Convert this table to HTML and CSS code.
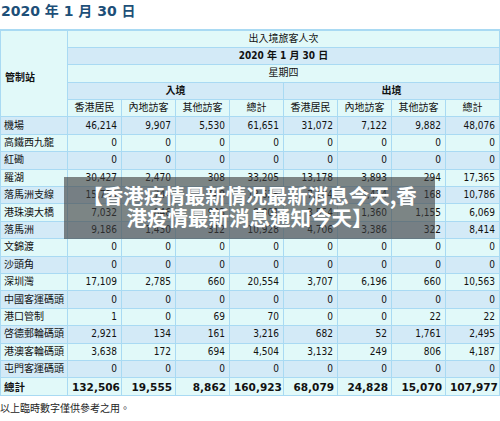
FILE: index.html
```html
<!DOCTYPE html>
<html lang="zh-Hant">
<head>
    <meta charset="UTF-8">
    <meta name="viewport" content="width=device-width, initial-scale=1.0">
    <title>出入境旅客人次</title>
    <link rel="stylesheet" href="styles.css">
</head>
<body>

    <div class="page">
        <h1 class="date-title">2020 年 1 月 30 日</h1>

        <div class="table-wrap">
            <table class="stats">
                <colgroup>
                    <col class="col-name">
                    <col span="8" class="col-num">
                </colgroup>
                <thead>
                    <tr class="cyan">
                        <th rowspan="5" class="station-head">管制站</th>
                        <th colspan="8" class="plain">出入境旅客人次</th>
                    </tr>
                    <tr class="blue">
                        <th colspan="8">2020 年 1 月 30 日</th>
                    </tr>
                    <tr class="cyan">
                        <th colspan="8" class="plain">星期四</th>
                    </tr>
                    <tr class="blue">
                        <th colspan="4">入境</th>
                        <th colspan="4">出境</th>
                    </tr>
                    <tr class="cyan">
                        <th class="plain">香港居民</th>
                        <th class="plain">內地訪客</th>
                        <th class="plain">其他訪客</th>
                        <th class="plain">總計</th>
                        <th class="plain">香港居民</th>
                        <th class="plain">內地訪客</th>
                        <th class="plain">其他訪客</th>
                        <th class="plain">總計</th>
                    </tr>
                </thead>
                <tbody>
                    <tr class="blue"><td>機場</td><td>46,214</td><td>9,907</td><td>5,530</td><td>61,651</td><td>31,072</td><td>7,122</td><td>9,882</td><td>48,076</td></tr>
                    <tr class="cyan"><td>高鐵西九龍</td><td>0</td><td>0</td><td>0</td><td>0</td><td>0</td><td>0</td><td>0</td><td>0</td></tr>
                    <tr class="blue"><td>紅磡</td><td>0</td><td>0</td><td>0</td><td>0</td><td>0</td><td>0</td><td>0</td><td>0</td></tr>
                    <tr class="cyan"><td>羅湖</td><td>30,427</td><td>2,470</td><td>308</td><td>33,205</td><td>13,178</td><td>3,893</td><td>294</td><td>17,365</td></tr>
                    <tr class="blue"><td>落馬洲支線</td><td>15,733</td><td>2,744</td><td>148</td><td>18,625</td><td>7,184</td><td>3,434</td><td>168</td><td>10,786</td></tr>
                    <tr class="cyan"><td>港珠澳大橋</td><td>7,032</td><td>846</td><td>923</td><td>8,801</td><td>3,554</td><td>1,360</td><td>1,155</td><td>6,069</td></tr>
                    <tr class="blue"><td>落馬洲</td><td>9,186</td><td>1,430</td><td>312</td><td>10,928</td><td>4,706</td><td>3,386</td><td>322</td><td>8,414</td></tr>
                    <tr class="cyan"><td>文錦渡</td><td>0</td><td>0</td><td>0</td><td>0</td><td>0</td><td>0</td><td>0</td><td>0</td></tr>
                    <tr class="blue"><td>沙頭角</td><td>0</td><td>0</td><td>0</td><td>0</td><td>0</td><td>0</td><td>0</td><td>0</td></tr>
                    <tr class="cyan"><td>深圳灣</td><td>17,109</td><td>2,785</td><td>660</td><td>20,554</td><td>3,707</td><td>6,196</td><td>660</td><td>10,563</td></tr>
                    <tr class="blue"><td>中國客運碼頭</td><td>0</td><td>0</td><td>0</td><td>0</td><td>0</td><td>0</td><td>0</td><td>0</td></tr>
                    <tr class="cyan"><td>港口管制</td><td>1</td><td>0</td><td>69</td><td>70</td><td>0</td><td>0</td><td>22</td><td>22</td></tr>
                    <tr class="blue"><td>啓德郵輪碼頭</td><td>2,921</td><td>134</td><td>161</td><td>3,216</td><td>682</td><td>52</td><td>1,761</td><td>2,495</td></tr>
                    <tr class="cyan"><td>港澳客輪碼頭</td><td>3,638</td><td>172</td><td>694</td><td>4,504</td><td>3,132</td><td>249</td><td>806</td><td>4,187</td></tr>
                    <tr class="blue"><td>屯門客運碼頭</td><td>0</td><td>0</td><td>0</td><td>0</td><td>0</td><td>0</td><td>0</td><td>0</td></tr>
                    <tr class="cyan total"><td>總計</td><td>132,506</td><td>19,555</td><td>8,862</td><td>160,923</td><td>68,079</td><td>24,828</td><td>15,070</td><td>107,977</td></tr>
                </tbody>
            </table>

            <div class="caption-box">【香港疫情最新情况最新消息今天,香港疫情最新消息通知今天】</div>
        </div>

        <p class="note">以上臨時數字僅供參考之用。</p>
    </div>

</body>
</html>
```

FILE: styles.css
```css
body {
    margin: 0;
    background-color: #fff;
    font-family: "DejaVu Sans Condensed", "Noto Sans CJK TC", sans-serif;
    color: #111;
}

.page {
    width: 500px;
}

.date-title {
    margin: 0;
    height: 29px;
    padding-left: 1px;
    font-family: "DejaVu Sans", "Noto Sans CJK TC", sans-serif;
    font-size: 14px;
    line-height: 22px;
    font-weight: bold;
    color: #1d4f78;
}

.table-wrap {
    position: relative;
}

.stats {
    width: 500px;
    border-collapse: collapse;
    table-layout: fixed;
    font-size: 10px;
    border-top: 2px solid #a9daf3;
}

.col-name {
    width: 67px;
}

.col-num {
    width: 54px;
}

.stats tr {
    height: 17.4px;
}

.stats th,
.stats td {
    padding: 0 4px;
    border: 1px solid #a9daf3;
    line-height: 14px;
    white-space: nowrap;
    overflow: hidden;
}

.stats th {
    text-align: center;
    font-weight: bold;
}

.stats th.plain {
    font-weight: normal;
}

.stats th.station-head {
    text-align: left;
    vertical-align: middle;
    padding-top: 8px;
    background-color: #e1f9f9;
}

.stats td {
    text-align: right;
}

.stats td:first-child {
    text-align: left;
    padding-left: 3px;
}

.cyan {
    background-color: #e1f9f9;
}

.blue {
    background-color: #d3eaf7;
}

.total td {
    font-family: "DejaVu Sans", "Noto Sans CJK TC", sans-serif;
    font-size: 10.5px;
    font-weight: bold;
    padding-right: 3px;
}

.caption-box {
    position: absolute;
    left: 64px;
    top: 148px;
    width: 371px;
    height: 62px;
    box-sizing: border-box;
    padding: 7px 15px 0;
    background-color: rgba(62, 62, 62, 0.62);
    color: #fff;
    font-family: "Noto Sans CJK SC", "Noto Sans CJK TC", sans-serif;
    font-size: 20.5px;
    font-weight: bold;
    line-height: 22px;
    text-align: center;
}

.note {
    margin: 4px 0 0;
    font-size: 10px;
    color: #222;
    font-family: "Noto Sans CJK TC", sans-serif;
}
```
